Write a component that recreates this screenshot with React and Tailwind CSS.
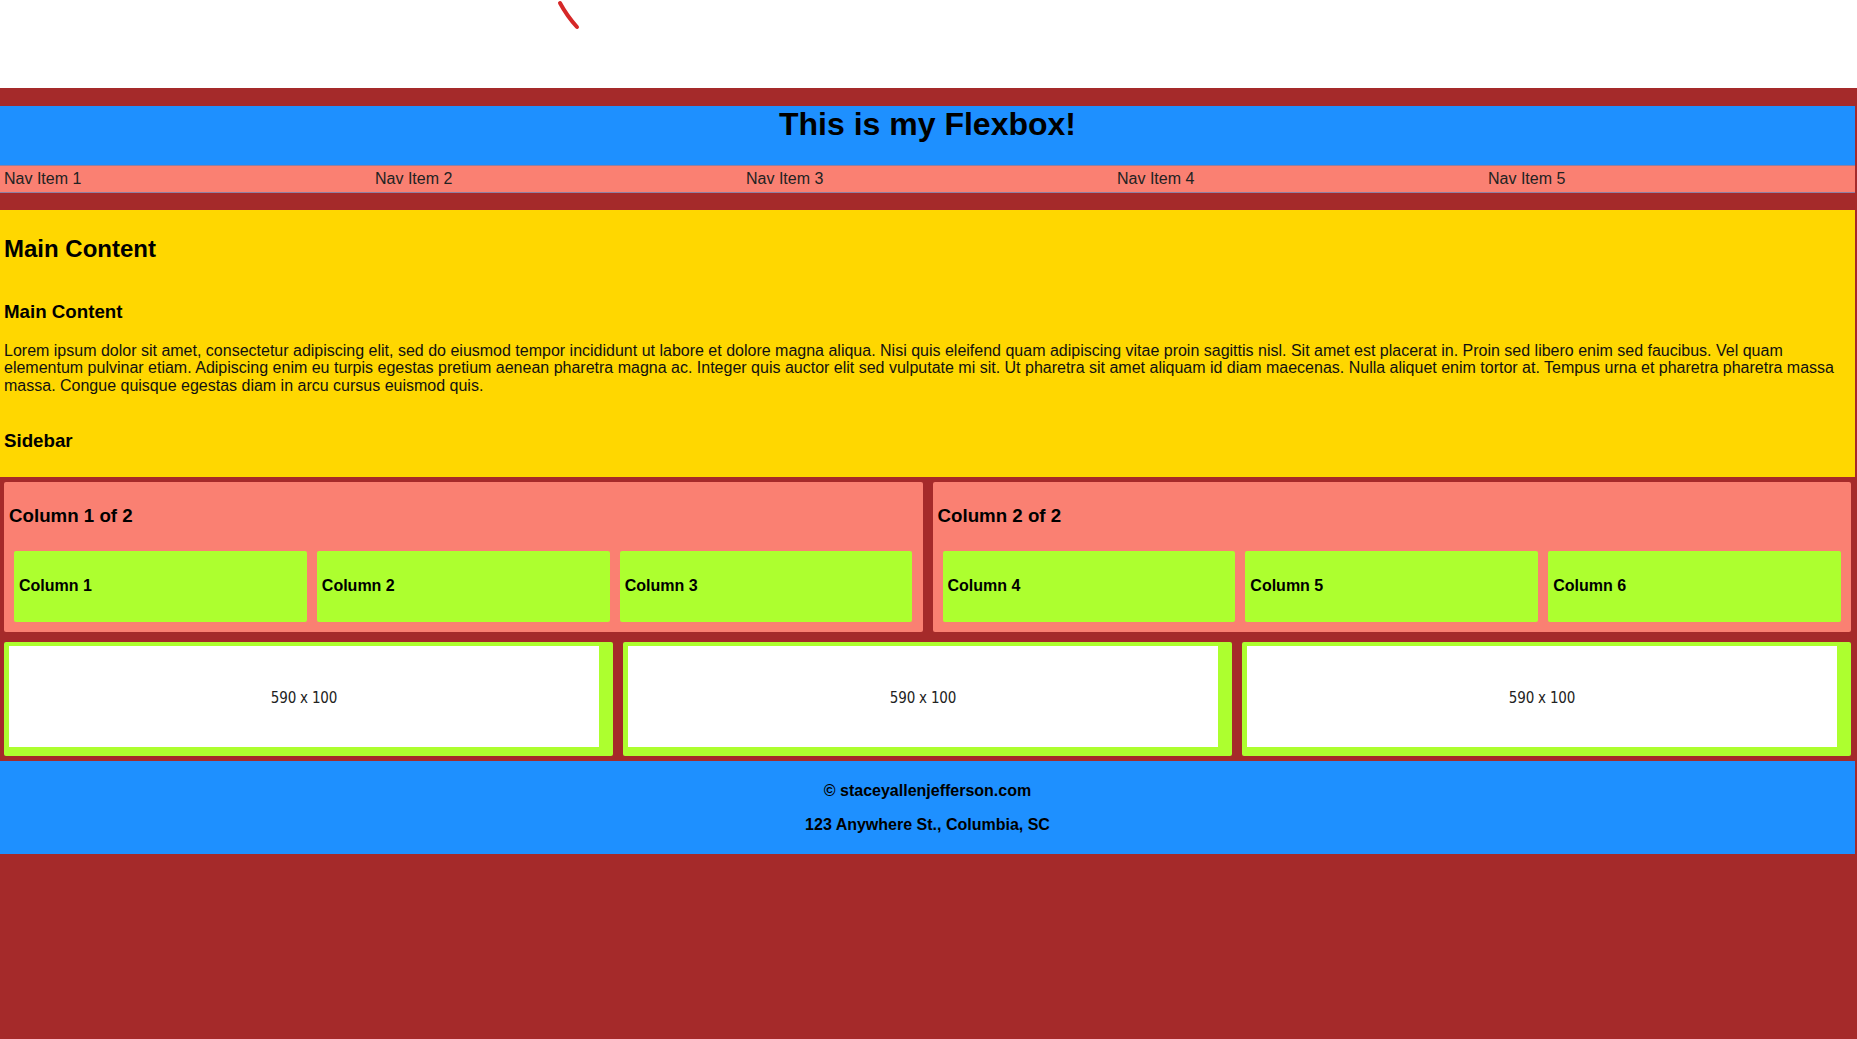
import React from "react";

const navItems = ["Nav Item 1", "Nav Item 2", "Nav Item 3", "Nav Item 4", "Nav Item 5"];

function Green({ children }) {
  return (
    <div className="flex-1 h-[71px] bg-[#adff2f] rounded-[2px] flex items-center pl-[5px] text-[16px] font-bold">
      {children}
    </div>
  );
}

function Half({ title, cols }) {
  return (
    <div className="flex-1 bg-[#fa8072] rounded-[2px] px-[10px] pt-[23px] pb-[10px]">
      <h3 className="text-[18.72px] font-bold leading-[21.5px] -ml-[5px] pl-[0px]">{title}</h3>
      <div className="flex gap-[10px] mt-[24px]">
        {cols.map((c) => (
          <Green key={c}>{c}</Green>
        ))}
      </div>
    </div>
  );
}

function ImgBox() {
  return (
    <div className="flex-1 h-[114px] bg-[#adff2f] rounded-[2px] pl-[5px] pt-[4px]">
      <div className="w-[590px] h-[101px] bg-white flex items-center justify-center pt-[4px] text-[15px] text-[#222] font-['DejaVu_Sans_Condensed','Open_Sans',sans-serif] tracking-[-0.2px]">
        590 x 100
      </div>
    </div>
  );
}

export default function App() {
  return (
    <div className="min-h-[1039px] bg-[#a52a2a] font-['Liberation_Sans',Arial,sans-serif] text-black">
      <div className="h-[88px] bg-white relative">
        <svg className="absolute left-[555px] top-0" width="30" height="34" viewBox="0 0 30 34">
          <path d="M5 3 Q 12 16 22 27" stroke="#d62828" strokeWidth="4" strokeLinecap="round" fill="none" />
        </svg>
      </div>
      <div className="w-[1855px] pt-[18px]">
        <header className="h-[59px] bg-[#1e90ff]">
          <h1 className="text-[32px] font-bold leading-[37px] text-center">This is my Flexbox!</h1>
        </header>
        <nav className="flex h-[28px] bg-[#fa8072] border-y border-[#8f7fa3] text-[16px] leading-[25px] text-[#222]">
          {navItems.map((n) => (
            <div key={n} className="flex-1 pl-[4px]">
              {n}
            </div>
          ))}
        </nav>
        <section className="mt-[17px] bg-[#ffd700] px-[4px] pt-[25px] pb-[26px] flex flex-col">
          <h2 className="text-[24px] font-bold leading-[27.6px]">Main Content</h2>
          <h3 className="mt-[38px] text-[18.72px] font-bold leading-[21.5px]">Main Content</h3>
          <p className="mt-[19.5px] text-[16px] leading-[17.8px] text-[#111]">
            Lorem ipsum dolor sit amet, consectetur adipiscing elit, sed do eiusmod tempor incididunt ut labore et dolore magna aliqua. Nisi quis eleifend quam adipiscing vitae proin sagittis nisl. Sit amet est placerat in. Proin sed libero enim sed faucibus. Vel quam elementum pulvinar etiam. Adipiscing enim eu turpis egestas pretium aenean pharetra magna ac. Integer quis auctor elit sed vulputate mi sit. Ut pharetra sit amet aliquam id diam maecenas. Nulla aliquet enim tortor at. Tempus urna et pharetra pharetra massa massa. Congue quisque egestas diam in arcu cursus euismod quis.
          </p>
          <h3 className="mt-[35px] text-[18.72px] font-bold leading-[21.5px]">Sidebar</h3>
        </section>
        <div className="flex gap-[10px] px-[4px] mt-[5px]">
          <Half title="Column 1 of 2" cols={["Column 1", "Column 2", "Column 3"]} />
          <Half title="Column 2 of 2" cols={["Column 4", "Column 5", "Column 6"]} />
        </div>
        <div className="flex gap-[10px] px-[4px] mt-[10px]">
          <ImgBox />
          <ImgBox />
          <ImgBox />
        </div>
        <footer className="mt-[5px] h-[93px] bg-[#1e90ff] flex flex-col items-center pt-[21px] text-[16px] font-bold leading-[18.4px]">
          <p>© staceyallenjefferson.com</p>
          <p className="mt-[16px]">123 Anywhere St., Columbia, SC</p>
        </footer>
      </div>
    </div>
  );
}
